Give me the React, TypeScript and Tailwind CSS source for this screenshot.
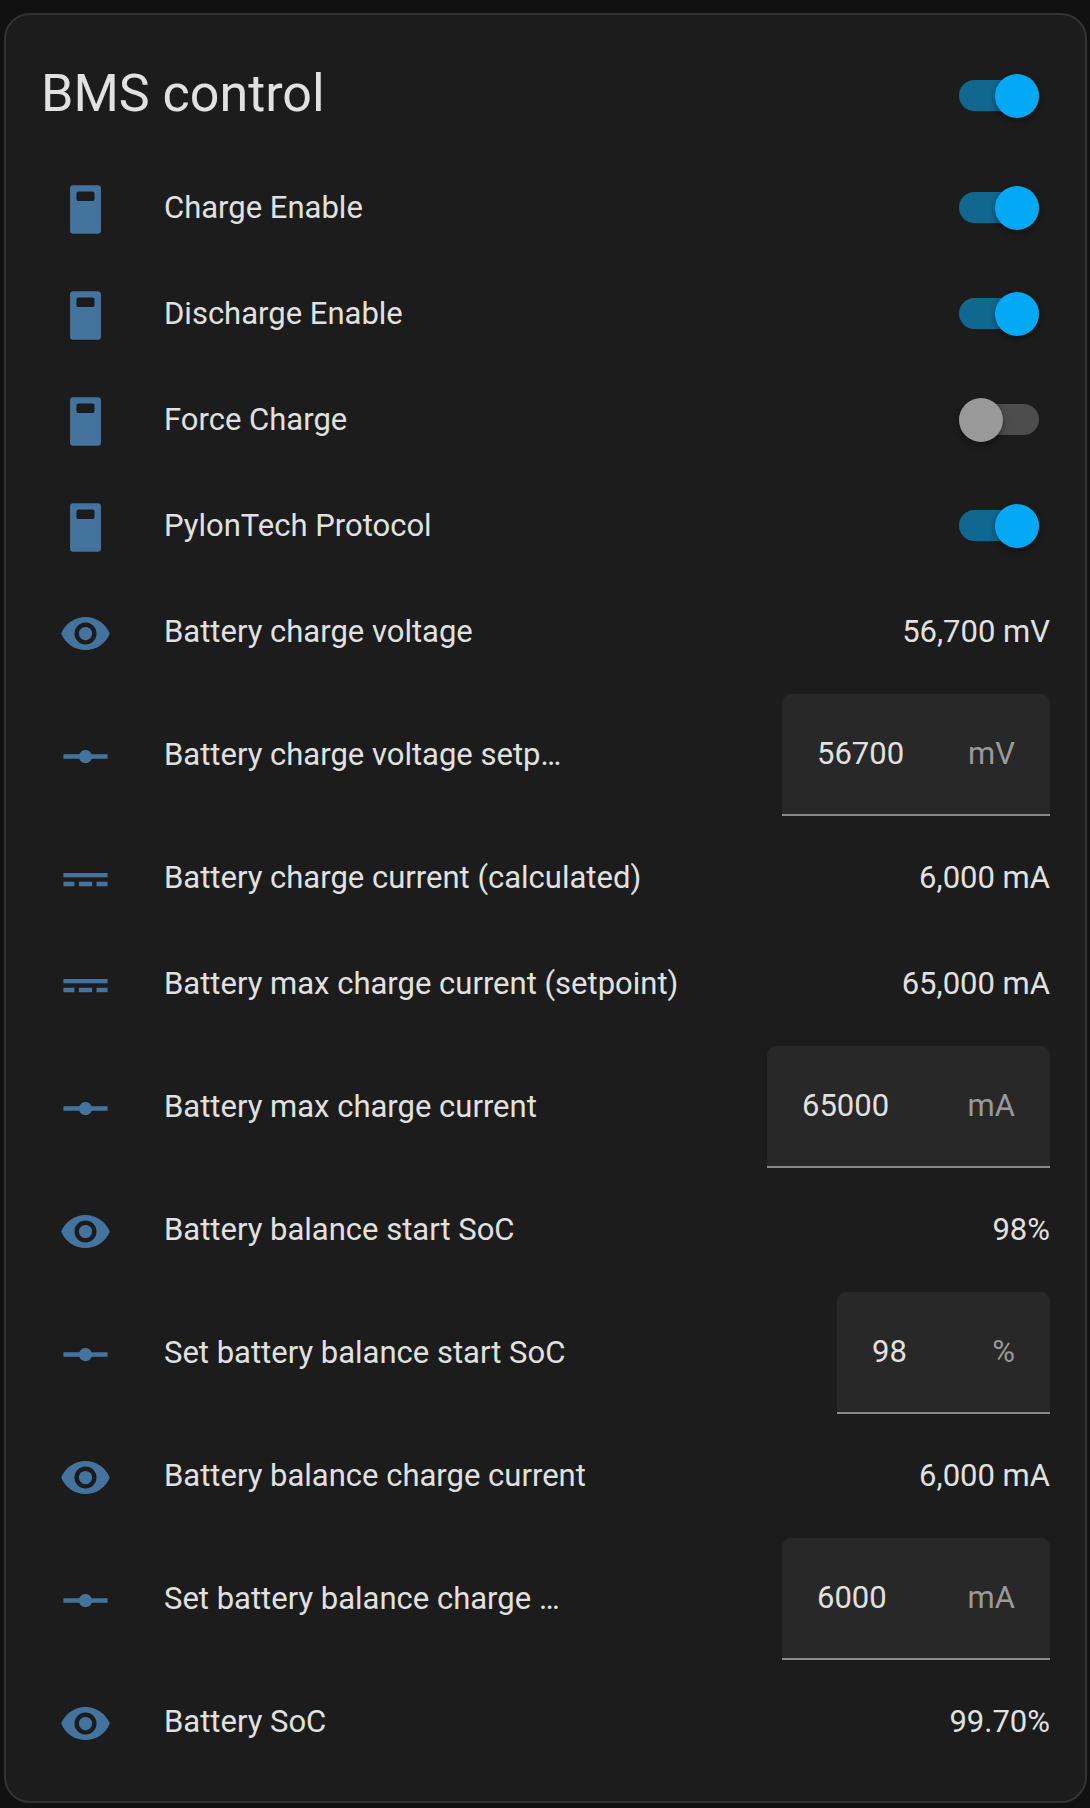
import { useId, useState } from "react";

type IconName = "switch" | "eye" | "vertex" | "dc";

type Entity =
  | { kind: "toggle"; icon: IconName; name: string; on: boolean }
  | { kind: "sensor"; icon: IconName; name: string; state: string }
  | {
      kind: "number";
      icon: IconName;
      name: string;
      value: string;
      unit: string;
      width: string;
    };

const entities: Entity[] = [
  { kind: "toggle", icon: "switch", name: "Charge Enable", on: true },
  { kind: "toggle", icon: "switch", name: "Discharge Enable", on: true },
  { kind: "toggle", icon: "switch", name: "Force Charge", on: false },
  { kind: "toggle", icon: "switch", name: "PylonTech Protocol", on: true },
  { kind: "sensor", icon: "eye", name: "Battery charge voltage", state: "56,700 mV" },
  {
    kind: "number",
    icon: "vertex",
    name: "Battery charge voltage setpoint",
    value: "56700",
    unit: "mV",
    width: "w-[268px]",
  },
  { kind: "sensor", icon: "dc", name: "Battery charge current (calculated)", state: "6,000 mA" },
  { kind: "sensor", icon: "dc", name: "Battery max charge current (setpoint)", state: "65,000 mA" },
  {
    kind: "number",
    icon: "vertex",
    name: "Battery max charge current",
    value: "65000",
    unit: "mA",
    width: "w-[283px]",
  },
  { kind: "sensor", icon: "eye", name: "Battery balance start SoC", state: "98%" },
  {
    kind: "number",
    icon: "vertex",
    name: "Set battery balance start SoC",
    value: "98",
    unit: "%",
    width: "w-[213px]",
  },
  { kind: "sensor", icon: "eye", name: "Battery balance charge current", state: "6,000 mA" },
  {
    kind: "number",
    icon: "vertex",
    name: "Set battery balance charge current",
    value: "6000",
    unit: "mA",
    width: "w-[268px]",
  },
  { kind: "sensor", icon: "eye", name: "Battery SoC", state: "99.70%" },
];

const iconPaths: Record<IconName, string> = {
  switch:
    "M6.5 1A1.5 1.5 0 0 0 5 2.5V21.5A1.5 1.5 0 0 0 6.5 23H17.5A1.5 1.5 0 0 0 19 21.5V2.5A1.5 1.5 0 0 0 17.5 1H6.5M8.9 3.8H15.1A1 1 0 0 1 16.1 4.8V7.2A1 1 0 0 1 15.1 8.2H8.9A1 1 0 0 1 7.9 7.2V4.8A1 1 0 0 1 8.9 3.8Z",
  eye: "M12,9A3,3 0 0,0 9,12A3,3 0 0,0 12,15A3,3 0 0,0 15,12A3,3 0 0,0 12,9M12,17A5,5 0 0,1 7,12A5,5 0 0,1 12,7A5,5 0 0,1 17,12A5,5 0 0,1 12,17M12,4.5C7,4.5 2.73,7.61 1,12C2.73,16.39 7,19.5 12,19.5C17,19.5 21.27,16.39 23,12C21.27,7.61 17,4.5 12,4.5Z",
  vertex:
    "M2 11H9.17C9.58 9.83 10.69 9 12 9S14.42 9.83 14.83 11H22V13H14.83C14.42 14.17 13.31 15 12 15S9.58 14.17 9.17 13H2V11Z",
  dc: "M2,9V11H22V9H2M2,13V15H7V13H2M9,13V15H15V13H9M17,13V15H22V13H17Z",
};

function EntityIcon({ name }: { name: IconName }) {
  return (
    <span className="flex w-[88px] shrink-0 justify-center pt-0.5">
      <svg
        viewBox="0 0 24 24"
        className="h-[53px] w-[53px] fill-[#44739e]"
        fillRule="evenodd"
        aria-hidden
      >
        <path d={iconPaths[name]} />
      </svg>
    </span>
  );
}

function Toggle({
  id,
  label,
  checked,
  onChange,
}: {
  id?: string;
  label?: string;
  checked: boolean;
  onChange: (checked: boolean) => void;
}) {
  return (
    <input
      id={id}
      type="checkbox"
      role="switch"
      aria-label={label}
      checked={checked}
      onChange={(e) => onChange(e.target.checked)}
      className="relative mr-[11px] h-11 w-20 shrink-0 cursor-pointer appearance-none before:absolute before:inset-x-0 before:top-[6px] before:h-[31px] before:rounded-full before:bg-[#4d4d4d] after:absolute after:top-0 after:left-0 after:size-11 after:rounded-full after:bg-[#999999] after:shadow-[0_3px_6px_rgba(0,0,0,0.4)] checked:before:bg-[#106790] checked:after:left-9 checked:after:bg-[#03a9f4]"
    />
  );
}

function EntityRow({
  entity,
  on,
  onToggle,
}: {
  entity: Entity;
  on: boolean;
  onToggle: (on: boolean) => void;
}) {
  const id = useId();
  const [value, setValue] = useState(entity.kind === "number" ? entity.value : "");

  if (entity.kind === "toggle") {
    return (
      <li className="flex h-[88px] items-center">
        <EntityIcon name={entity.icon} />
        <label htmlFor={id} className="ml-[35px] min-w-0 flex-1 truncate">
          {entity.name}
        </label>
        <Toggle id={id} checked={on} onChange={onToggle} />
      </li>
    );
  }

  if (entity.kind === "number") {
    return (
      <li className="flex h-[122px] items-center">
        <EntityIcon name={entity.icon} />
        <label htmlFor={id} className="ml-[35px] min-w-0 flex-1 truncate">
          {entity.name}
        </label>
        <div className="flex h-full min-w-[480px] justify-end">
          <div
            className={`flex h-full items-center rounded-t-[9px] border-b-2 border-[#8a8a8a] bg-[#282828] px-[35px] ${entity.width}`}
          >
            <input
              id={id}
              inputMode="numeric"
              value={value}
              onChange={(e) => setValue(e.target.value)}
              className="min-w-0 flex-1 bg-transparent outline-none"
            />
            <span className="text-[#999999]">{entity.unit}</span>
          </div>
        </div>
      </li>
    );
  }

  return (
    <li className="flex h-[88px] items-center">
      <EntityIcon name={entity.icon} />
      <span className="ml-[35px] min-w-0 flex-1 truncate">{entity.name}</span>
      <span className="shrink-0">{entity.state}</span>
    </li>
  );
}

export default function App() {
  const [toggles, setToggles] = useState(
    entities.map((e) => e.kind === "toggle" && e.on),
  );
  const anyOn = toggles.some(Boolean);

  // the header switch drives every toggle row at once
  const setAll = (on: boolean) =>
    setToggles(entities.map((e) => e.kind === "toggle" && on));

  return (
    <main className="min-h-screen bg-[#111111] pt-[13px] pr-[3px] pb-[5px] pl-1 font-['Roboto',sans-serif] text-[31px] leading-[44px] text-[#e1e1e1]">
      <section className="rounded-[26px] border-2 border-[#333333] bg-[#1c1c1c] px-[35px] pt-7 pb-[35px]">
        <header className="mb-[15px] flex h-[106px] items-center justify-between">
          <h1 className="pb-1 text-[52px] leading-[64px]">BMS control</h1>
          <Toggle label="BMS control" checked={anyOn} onChange={setAll} />
        </header>
        <ul className="flex flex-col gap-[18px]">
          {entities.map((entity, i) => (
            <EntityRow
              key={entity.name}
              entity={entity}
              on={toggles[i]}
              onToggle={(on) =>
                setToggles((prev) => prev.map((t, j) => (j === i ? on : t)))
              }
            />
          ))}
        </ul>
      </section>
    </main>
  );
}
